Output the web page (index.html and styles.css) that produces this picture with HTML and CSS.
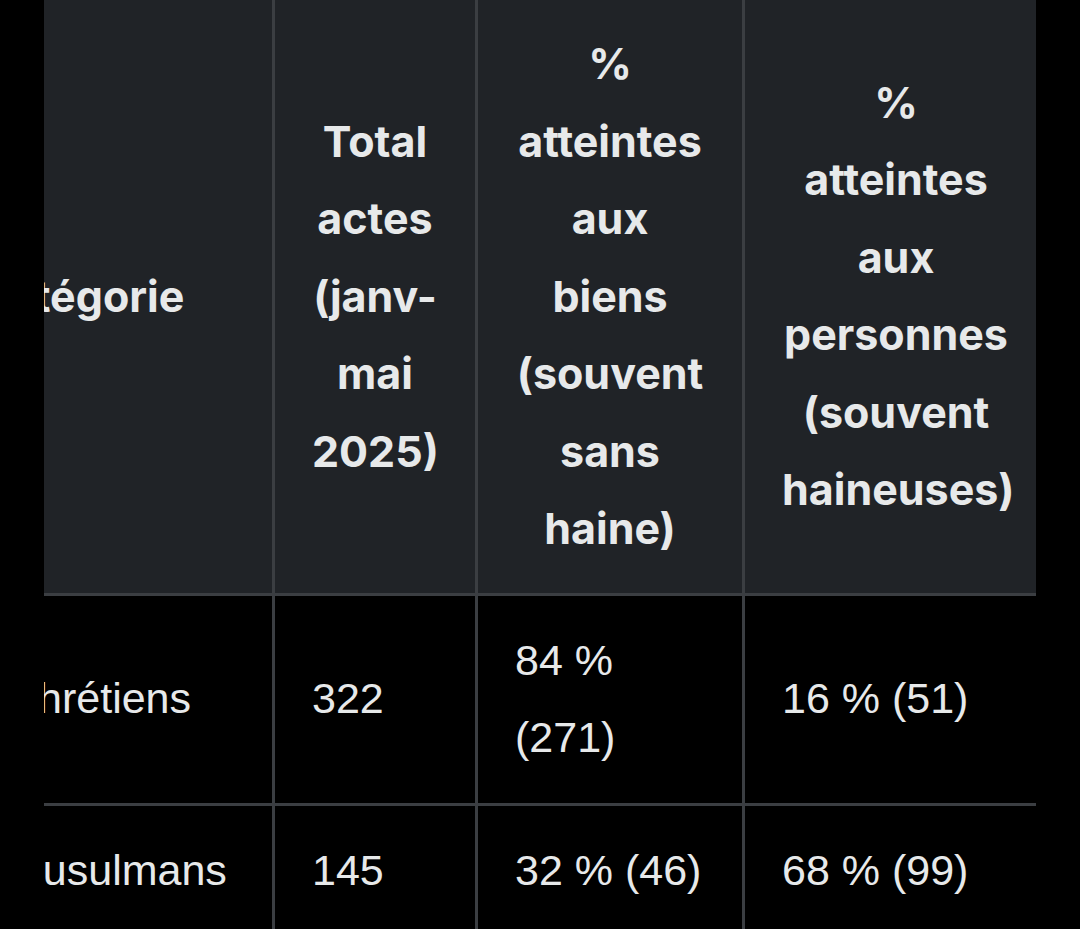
FILE: index.html
```html
<!DOCTYPE html>
<html lang="fr">
<head>
<meta charset="utf-8">
<title>Tableau</title>
<link rel="stylesheet" href="styles.css">
</head>
<body>
<div class="scroller">
  <table class="data">
    <colgroup>
      <col class="c-cat">
      <col class="c-total">
      <col class="c-biens">
      <col class="c-pers">
    </colgroup>
    <thead>
      <tr>
        <th class="th-first">Catégorie</th>
        <th>Total actes (janv-mai 2025)</th>
        <th>% atteintes aux biens (souvent sans haine)</th>
        <th class="last">% atteintes aux personnes (souvent haineuses)</th>
      </tr>
    </thead>
    <tbody>
      <tr>
        <td>Chrétiens</td>
        <td>322</td>
        <td>84 % (271)</td>
        <td class="last">16 % (51)</td>
      </tr>
      <tr>
        <td>Musulmans</td>
        <td>145</td>
        <td>32 % (46)</td>
        <td class="last">68 % (99)</td>
      </tr>
    </tbody>
  </table>
</div>
</body>
</html>
```
FILE: styles.css
```css
html, body {
  margin: 0;
  padding: 0;
  background: #000000;
}

body {
  width: 1080px;
  height: 929px;
  overflow: hidden;
}

.scroller {
  margin-left: 44px;
  width: 992px;
  overflow: hidden;
}

.data {
  margin-left: -74px;
  table-layout: fixed;
  border-collapse: separate;
  border-spacing: 0;
  width: 1077px;
  color: #e7e9ea;
}

.c-cat { width: 305px; }
.c-total { width: 203px; }
.c-biens { width: 267px; }
.c-pers { width: 302px; }

.data th,
.data td {
  box-sizing: border-box;
  border-right: 3px solid #3b3e42;
  border-bottom: 3px solid #3b3e42;
  line-height: 77.5px;
  vertical-align: middle;
}

.data th.last,
.data td.last {
  border-right: none;
}

.data th {
  background: #202327;
  font-family: "Inter", "Noto Sans", sans-serif;
  font-weight: 700;
  font-size: 43px;
  text-align: center;
  padding: 25px 37px;
}

.data th.th-first {
  text-align: left;
  padding-left: 8px;
}

.data td {
  font-family: "Liberation Sans", Arial, sans-serif;
  font-weight: 400;
  font-size: 43px;
  text-align: left;
  padding: 26px 37px;
}
```
